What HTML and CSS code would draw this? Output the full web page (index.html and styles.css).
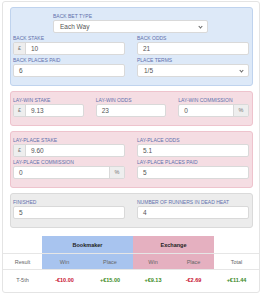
FILE: index.html
```html
<!DOCTYPE html>
<html lang="en">
<head>
    <meta charset="UTF-8">
    <meta name="viewport" content="width=device-width, initial-scale=1.0">
    <title>Each way calculator</title>
    <link rel="stylesheet" href="styles.css">
</head>
<body>
    <main class="card">
        <div class="form">
            <section class="panel panel-back">
                <div class="grupo grupo-centro">
                    <label>Back bet type</label>
                    <div class="campo select">Each Way<span class="flecha"></span></div>
                </div>
                <div class="fila dos">
                    <div class="grupo">
                        <label>Back stake</label>
                        <div class="campo"><span class="addon">£</span><span class="valor">10</span></div>
                    </div>
                    <div class="grupo">
                        <label>Back odds</label>
                        <div class="campo"><span class="valor">21</span></div>
                    </div>
                </div>
                <div class="fila dos">
                    <div class="grupo">
                        <label>Back places paid</label>
                        <div class="campo"><span class="valor">6</span></div>
                    </div>
                    <div class="grupo">
                        <label>Place terms</label>
                        <div class="campo select">1/5<span class="flecha"></span></div>
                    </div>
                </div>
            </section>

            <section class="panel panel-lay">
                <div class="fila tres">
                    <div class="grupo">
                        <label>Lay-win stake</label>
                        <div class="campo"><span class="addon">£</span><span class="valor">9.13</span></div>
                    </div>
                    <div class="grupo">
                        <label>Lay-win odds</label>
                        <div class="campo"><span class="valor">23</span></div>
                    </div>
                    <div class="grupo">
                        <label>Lay-win commission</label>
                        <div class="campo"><span class="valor">0</span><span class="addon addon-der">%</span></div>
                    </div>
                </div>
            </section>

            <section class="panel panel-lay">
                <div class="fila dos">
                    <div class="grupo">
                        <label>Lay-place stake</label>
                        <div class="campo"><span class="addon">£</span><span class="valor">9.60</span></div>
                    </div>
                    <div class="grupo">
                        <label>Lay-place odds</label>
                        <div class="campo"><span class="valor">5.1</span></div>
                    </div>
                </div>
                <div class="fila dos">
                    <div class="grupo">
                        <label>Lay-place commission</label>
                        <div class="campo"><span class="valor">0</span><span class="addon addon-der">%</span></div>
                    </div>
                    <div class="grupo">
                        <label>Lay-place places paid</label>
                        <div class="campo"><span class="valor">5</span></div>
                    </div>
                </div>
            </section>

            <section class="panel panel-gris">
                <div class="fila dos">
                    <div class="grupo">
                        <label>Finished</label>
                        <div class="campo"><span class="valor">5</span></div>
                    </div>
                    <div class="grupo">
                        <label>Number of runners in dead heat</label>
                        <div class="campo"><span class="valor">4</span></div>
                    </div>
                </div>
            </section>
        </div>

        <table class="resultados">
            <colgroup>
                <col class="c-result">
                <col class="c-bwin">
                <col class="c-bplace">
                <col class="c-ewin">
                <col class="c-eplace">
                <col>
            </colgroup>
            <tr class="cabecera">
                <td></td>
                <th colspan="2" class="bookie">Bookmaker</th>
                <th colspan="2" class="exchange">Exchange</th>
                <td></td>
            </tr>
            <tr class="sub">
                <td>Result</td>
                <td class="bookie">Win</td>
                <td class="bookie">Place</td>
                <td class="exchange">Win</td>
                <td class="exchange">Place</td>
                <td>Total</td>
            </tr>
            <tr class="datos">
                <td>T-5th</td>
                <td class="neg">-€10.00</td>
                <td class="pos">+€15.00</td>
                <td class="pos">+€9.13</td>
                <td class="neg">-€2.69</td>
                <td class="pos">+€11.44</td>
            </tr>
        </table>
    </main>
</body>
</html>
```

FILE: styles.css
```css
body {
    margin: 0;
    background-color: #fff;
    font-family: "Liberation Sans", Arial, sans-serif;
    color: #555;
}

.card {
    margin: 1px 2px;
    border: 1px solid #e4e4e4;
    border-radius: 3px;
    padding-bottom: 3px;
}

.form {
    padding: 5px 6px 0 7px;
}

.panel {
    border: 1px solid;
    border-radius: 3px;
    padding: 4px 3px 7px 2px;
    margin-bottom: 5px;
}

.panel-back {
    background-color: #dde9f8;
    border-color: #bfd3ee;
}

.panel-lay {
    background-color: #f5dde3;
    border-color: #eec3cd;
}

.panel-gris {
    background-color: #ececec;
    border-color: #dadada;
}

.fila {
    display: grid;
    gap: 0 12px;
}

.dos {
    grid-template-columns: 1fr 1fr;
}

.tres {
    grid-template-columns: 1fr 1fr 1fr;
}

.grupo {
    margin-bottom: 1px;
}

.grupo-centro {
    width: 155px;
    margin-left: 40px;
}

label {
    display: block;
    height: 8px;
    line-height: 8px;
    font-size: 5px;
    text-transform: uppercase;
    color: #6170ac;
    white-space: nowrap;
}

.campo {
    display: flex;
    align-items: stretch;
    height: 13px;
    box-sizing: border-box;
    background-color: #fff;
    border: 1px solid #d9d9d9;
    border-radius: 2px;
    font-size: 6.5px;
    line-height: 11px;
    color: #555;
}

.valor {
    flex: 1;
    padding-left: 5px;
}

.addon {
    width: 11px;
    background-color: #eee;
    border-right: 1px solid #d9d9d9;
    text-align: center;
    font-size: 5.5px;
    color: #777;
}

.addon-der {
    width: 14px;
    border-right: none;
    border-left: 1px solid #d9d9d9;
}

.select {
    position: relative;
    padding-left: 6px;
}

.flecha {
    position: absolute;
    right: 5px;
    top: 4px;
    width: 2px;
    height: 2px;
    border-right: 1px solid #666;
    border-bottom: 1px solid #666;
    transform: rotate(45deg);
}

.resultados {
    width: 100%;
    margin-top: 8px;
    border-collapse: collapse;
    table-layout: fixed;
    font-size: 5.5px;
    text-align: center;
}

.c-result {
    width: 39px;
}

.c-bwin {
    width: 45px;
}

.c-bplace {
    width: 46px;
}

.c-ewin {
    width: 40px;
}

.c-eplace {
    width: 41px;
}

.resultados td,
.resultados th {
    padding: 0;
    border-top: 1px solid #e6e6e6;
}

.cabecera td,
.cabecera th {
    border-top: none;
    height: 17px;
}

.cabecera th {
    color: #222;
    font-weight: bold;
}

.sub td {
    height: 15px;
    color: #666;
}

.datos td {
    height: 19px;
    font-weight: bold;
}

.resultados tr td:first-child {
    font-weight: normal;
    color: #666;
}

.bookie {
    background-color: #a8c4ef;
}

.exchange {
    background-color: #e5b0c0;
}

.neg {
    color: #c8102e;
}

.pos {
    color: #3b8a25;
}
```
